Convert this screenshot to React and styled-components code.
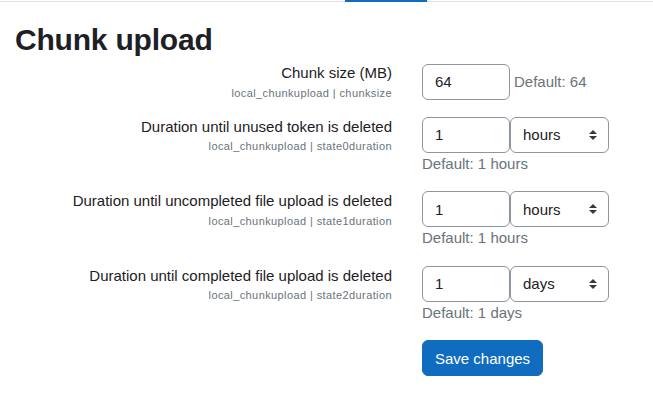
import React from 'react'
import styled, { createGlobalStyle } from 'styled-components'

const GlobalStyle = createGlobalStyle`
  body {
    margin: 0;
    background: #ffffff;
    color: #1d2125;
    font-family: "Liberation Sans", Arial, sans-serif;
    font-size: 15px;
  }
`

const Tabs = styled.div`
  display: flex;
  height: 1px;
  border-bottom: 1px solid #dee2e6;
`

const ActiveTab = styled.div`
  width: 82px;
  height: 2px;
  margin-left: 345px;
  background: #0f6cbf;
`

const Page = styled.div`
  padding: 0 15px;
`

const Title = styled.h2`
  margin: 20px 0 5px 0;
  font-size: 30px;
  line-height: 36px;
  font-weight: 700;
  letter-spacing: -0.2px;
`

const Row = styled.div`
  display: grid;
  grid-template-columns: 377px auto;
  column-gap: 30px;
  margin-bottom: ${props => (props.tight ? '16px' : '16px')};
`

const LabelCol = styled.div`
  text-align: right;
  margin-top: -1px;
`

const Label = styled.div`
  font-size: 15px;
  line-height: 22.5px;
`

const ShortName = styled.div`
  font-size: 11px;
  line-height: 16px;
  letter-spacing: 0.4px;
  color: #6a737b;
`

const Controls = styled.div`
  display: flex;
  align-items: center;
`

const TextInput = styled.input`
  box-sizing: border-box;
  width: 88px;
  height: 36px;
  padding: 6px 12px;
  border: 1px solid #8f959e;
  border-radius: 6px;
  font-family: inherit;
  font-size: 15px;
  color: #1d2125;
  background: #fff;
  outline: none;
`

const SelectWrap = styled.div`
  position: relative;
  width: 99px;
  height: 36px;
`

const Select = styled.select`
  box-sizing: border-box;
  width: 100%;
  height: 100%;
  padding: 6px 28px 6px 12px;
  border: 1px solid #8f959e;
  border-radius: 6px;
  font-family: inherit;
  font-size: 15px;
  color: #1d2125;
  background: #fff;
  appearance: none;
  -webkit-appearance: none;
  outline: none;
`

const Caret = styled.svg`
  position: absolute;
  right: 12px;
  top: 13px;
  pointer-events: none;
`

const DefaultInfo = styled.div`
  color: #6a737b;
  font-size: 15px;
  line-height: 22.5px;
  margin-left: ${props => (props.inline ? '4px' : '0')};
`

const SaveButton = styled.button`
  box-sizing: border-box;
  height: 36px;
  padding: 6px 12px;
  border: 1px solid #0f6cbf;
  border-radius: 6px;
  background: #0f6cbf;
  color: #fff;
  font-family: inherit;
  font-size: 15px;
`

const Spacer = styled.div``

const SelectCaret = () => (
  <Caret width="8" height="10" viewBox="0 0 4 5">
    <path d="M2 0L0 2h4zm0 5L0 3h4z" fill="#343a40" />
  </Caret>
)

const durations = [
  {
    label: 'Duration until unused token is deleted',
    name: 'state0duration',
    unit: 'hours'
  },
  {
    label: 'Duration until uncompleted file upload is deleted',
    name: 'state1duration',
    unit: 'hours'
  },
  {
    label: 'Duration until completed file upload is deleted',
    name: 'state2duration',
    unit: 'days'
  }
]

export default function App() {
  return (
    <>
      <GlobalStyle />
      <Tabs>
        <ActiveTab />
      </Tabs>
      <Page>
        <Title>Chunk upload</Title>

        <Row>
          <LabelCol>
            <Label>Chunk size (MB)</Label>
            <ShortName>local_chunkupload | chunksize</ShortName>
          </LabelCol>
          <Controls>
            <TextInput defaultValue="64" />
            <DefaultInfo inline>Default: 64</DefaultInfo>
          </Controls>
        </Row>

        {durations.map(d => (
          <Row key={d.name}>
            <LabelCol>
              <Label>{d.label}</Label>
              <ShortName>local_chunkupload | {d.name}</ShortName>
            </LabelCol>
            <div>
              <Controls>
                <TextInput defaultValue="1" />
                <SelectWrap>
                  <Select defaultValue={d.unit}>
                    <option value="weeks">weeks</option>
                    <option value="days">days</option>
                    <option value="hours">hours</option>
                    <option value="minutes">minutes</option>
                    <option value="seconds">seconds</option>
                  </Select>
                  <SelectCaret />
                </SelectWrap>
              </Controls>
              <DefaultInfo>Default: 1 {d.unit}</DefaultInfo>
            </div>
          </Row>
        ))}

        <Row>
          <Spacer />
          <Controls>
            <SaveButton>Save changes</SaveButton>
          </Controls>
        </Row>
      </Page>
    </>
  )
}
